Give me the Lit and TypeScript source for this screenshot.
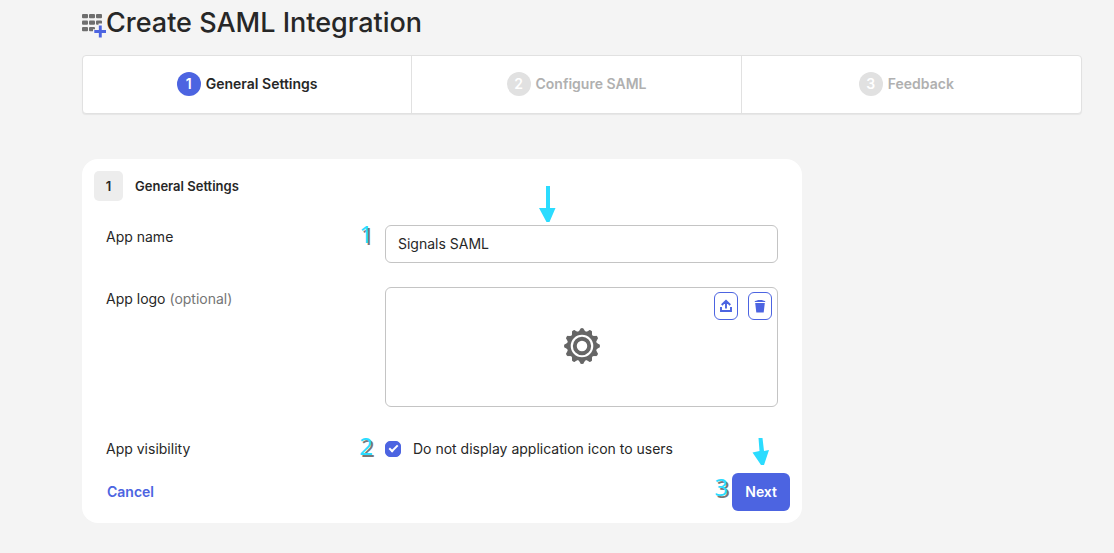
import { LitElement, html, css, svg } from "lit";
import { customElement, property, state } from "lit/decorators.js";
import { classMap } from "lit/directives/class-map.js";

const steps = ["General Settings", "Configure SAML", "Feedback"];

const gearTeeth = Array.from({ length: 12 }, (_, i) => i * 30);

@customElement("step-bar")
class StepBar extends LitElement {
  @property({ type: Number }) current = 1;

  static styles = css`
    :host {
      display: block;
    }
    .steps {
      display: flex;
      margin: 0;
      padding: 0;
      list-style: none;
      background: #fff;
      border: 1px solid #e1e1e1;
      border-radius: 4px;
      box-shadow: 0 1px 1px rgba(0, 0, 0, 0.06);
    }
    .step {
      box-sizing: border-box;
      flex: 0 0 33%;
      display: flex;
      align-items: center;
      justify-content: center;
      gap: 5px;
      padding: 16px 0 17px;
      border-right: 1px solid #e1e1e1;
      font-size: 14px;
      font-weight: 600;
      line-height: 24px;
      color: #b0b0b0;
    }
    .step:last-child {
      border-right: 0;
    }
    .dot {
      width: 24px;
      height: 24px;
      border-radius: 50%;
      text-align: center;
      color: #fff;
      background: #e1e1e1;
    }
    .active {
      color: #272727;
    }
    .active .dot {
      background: #4c64e1;
    }
  `;

  render() {
    return html`<ol class="steps">
      ${steps.map(
        (label, i) => html`<li class=${classMap({ step: true, active: i + 1 === this.current })}>
          <span class="dot">${i + 1}</span><span>${label}</span>
        </li>`
      )}
    </ol>`;
  }
}

@customElement("app-root")
class AppRoot extends LitElement {
  @state() appName = "Signals SAML";
  @state() hideIcon = true;

  static styles = css`
    :host {
      display: block;
      box-sizing: border-box;
      min-height: 100vh;
      padding: 0 32px 30px 82px;
      background: #f4f4f4;
      color: #272727;
      font: 14px/24px Inter, sans-serif;
    }
    .title {
      display: flex;
      align-items: center;
      margin: 0;
      padding-bottom: 9px;
      font-size: 27px;
      font-weight: 500;
      line-height: 46px;
    }
    .apps {
      flex: none;
      margin-top: 6px;
    }
    .card {
      box-sizing: border-box;
      max-width: 720px;
      margin-top: 45px;
      padding: 12px;
      background: #fff;
      border-radius: 16px;
    }
    .head {
      display: flex;
      align-items: center;
      gap: 12px;
      margin-bottom: 24px;
    }
    .tile {
      width: 29px;
      border-radius: 5px;
      background: #ededed;
      font-size: 13px;
      font-weight: 600;
      line-height: 30px;
      text-align: center;
    }
    .subtitle {
      margin: 0;
      font-size: 13px;
      font-weight: 600;
      line-height: 30px;
    }
    .row {
      display: grid;
      grid-template-columns: 279px 1fr;
      padding: 0 12px;
    }
    .row + .row {
      margin-top: 24px;
    }
    .row + .visibility {
      margin-top: 30px;
    }
    .hint {
      color: #757575;
    }
    .field {
      position: relative;
    }
    .text {
      box-sizing: border-box;
      display: block;
      width: 100%;
      height: 38px;
      padding: 0 12px 1px;
      border: 1px solid #c4c4c4;
      border-radius: 6px;
      background: #fff;
      color: inherit;
      font: inherit;
    }
    .logo {
      box-sizing: border-box;
      display: grid;
      place-items: center;
      height: 120px;
      padding-bottom: 2px;
      border: 1px solid #c4c4c4;
      border-radius: 6px;
    }
    .tools {
      position: absolute;
      top: 4px;
      right: 5px;
      display: flex;
      gap: 10px;
    }
    .tool {
      display: grid;
      place-items: center;
      width: 24px;
      height: 28px;
      padding: 0;
      border: 1px solid #4c64e1;
      border-radius: 6px;
      background: #fff;
      color: #4c64e1;
    }
    .check {
      display: flex;
      align-items: center;
      gap: 12px;
    }
    .box {
      appearance: none;
      display: grid;
      place-items: center;
      width: 16px;
      height: 16px;
      margin: 0;
      border: 1px solid #8c8c8c;
      border-radius: 5px;
      background: #fff;
    }
    .box:checked {
      border-color: #4c64e1;
      background: #4c64e1;
    }
    .box:checked::before {
      content: "";
      width: 7px;
      height: 3px;
      margin-bottom: 3px;
      border: solid #fff;
      border-width: 0 0 2px 2px;
      transform: rotate(-45deg);
    }
    .foot {
      display: flex;
      align-items: center;
      justify-content: space-between;
      margin-top: 12px;
    }
    .cancel {
      padding-left: 13px;
      color: #4c64e1;
      font-weight: 600;
      text-decoration: none;
    }
    .next-wrap {
      position: relative;
    }
    .next {
      display: block;
      height: 38px;
      padding: 0 13px;
      border: 0;
      border-radius: 6px;
      background: #4c64e1;
      color: #fff;
      font: inherit;
      font-weight: 600;
    }
    .mark {
      position: absolute;
      right: calc(100% + 12px);
      top: -3px;
      color: #2bdcff;
      font: 24px/24px "Noto Sans", sans-serif;
      text-shadow: 2px 2px 0 #777;
    }
    .next-wrap .mark {
      right: calc(100% + 4px);
      top: 2px;
    }
    .arrow {
      position: absolute;
      bottom: calc(100% + 3px);
      left: 154px;
    }
    .next-wrap .arrow {
      bottom: calc(100% + 7px);
      left: 20px;
    }
  `;

  render() {
    return html`
      <h1 class="title">
        <svg class="apps" width="24" height="24" viewBox="0 0 24 24" aria-hidden="true">
          <g fill="#6e6e6e">
            <rect x="0" y="0" width="6" height="4.300" rx="1" />
            <rect x="7" y="0" width="6" height="4.300" rx="1" />
            <rect x="14" y="0" width="6" height="4.300" rx="1" />
            <rect x="0" y="6.500" width="6" height="4.300" rx="1" />
            <rect x="7" y="6.500" width="6" height="4.300" rx="1" />
            <path d="M15 6.500h4q1 0 1 1v2h-3.500v1.300H15q-1 0-1-1V7.500q0-1 1-1z" />
            <rect x="0" y="13" width="6" height="4.300" rx="1" />
            <path d="M8 13h4q1 0 1 1v1.200h-2v2.100H8q-1 0-1-1V14q0-1 1-1z" />
          </g>
          <path d="M18.300 11.500v12M12.300 17.500h12" stroke="#4c64e1" stroke-width="2.900" />
        </svg>
        <span>Create SAML Integration</span>
      </h1>
      <step-bar current="1"></step-bar>

      <form class="card" @submit=${(e: Event) => e.preventDefault()}>
        <div class="head">
          <span class="tile">1</span>
          <h2 class="subtitle">General Settings</h2>
        </div>

        <div class="row">
          <label for="name">App name</label>
          <div class="field">
            <span class="mark">1</span>
            <svg class="arrow" width="17" height="36" viewBox="0 0 17 36" aria-hidden="true">
              <path fill="#2bdcff" d="M7 0h4v22h5.500l-6 14h-3L0 22h7z" />
            </svg>
            <input
              class="text"
              id="name"
              type="text"
              .value=${this.appName}
              @input=${(e: Event) => (this.appName = (e.target as HTMLInputElement).value)}
            />
          </div>
        </div>

        <div class="row">
          <span>App logo <span class="hint">(optional)</span></span>
          <div class="field logo">
            <svg width="36" height="36" viewBox="-18 -18 36 36" aria-hidden="true">
              <g fill="#666">
                ${gearTeeth.map((a) => svg`<path transform="rotate(${a})" d="M-4.200 -13L-2 -16.500Q-1.800 -18 0 -18T2 -16.500L4.200 -13z" />`)}
              </g>
              <circle r="13.100" fill="none" stroke="#666" stroke-width="3.600" />
              <circle r="7.200" fill="none" stroke="#666" stroke-width="3.900" />
            </svg>
            <div class="tools">
              <button class="tool" type="button" aria-label="Upload logo">
                <svg width="12" height="14" viewBox="0 0 12 14" aria-hidden="true">
                  <path d="M6 9.500V2M1.700 6L6 1.800L10.300 6M1 8v4h10V8" fill="none" stroke="currentColor" stroke-width="1.900" />
                </svg>
              </button>
              <button class="tool" type="button" aria-label="Delete logo">
                <svg width="12" height="14" viewBox="0 0 12 14" aria-hidden="true">
                  <path d="M.5 3Q.5 1.800 3 1.600L4 1h4l1 .6Q11.500 1.800 11.500 3zM1.200 4h9.600L9.700 13.500H2.300z" fill="currentColor" />
                </svg>
              </button>
            </div>
          </div>
        </div>

        <div class="row visibility">
          <span>App visibility</span>
          <div class="field">
            <span class="mark">2</span>
            <label class="check">
              <input
                class="box"
                type="checkbox"
                .checked=${this.hideIcon}
                @change=${(e: Event) => (this.hideIcon = (e.target as HTMLInputElement).checked)}
              />
              Do not display application icon to users
            </label>
          </div>
        </div>

        <div class="foot">
          <a class="cancel" href="#">Cancel</a>
          <div class="next-wrap">
            <span class="mark">3</span>
            <svg class="arrow" width="17" height="28" viewBox="0 0 17 28" aria-hidden="true">
              <path fill="#2bdcff" d="M6.500 0h4l1.500 13l5-1L12 27H9L.5 14.500L7.500 13z" />
            </svg>
            <button class="next" type="submit">Next</button>
          </div>
        </div>
      </form>
    `;
  }
}
